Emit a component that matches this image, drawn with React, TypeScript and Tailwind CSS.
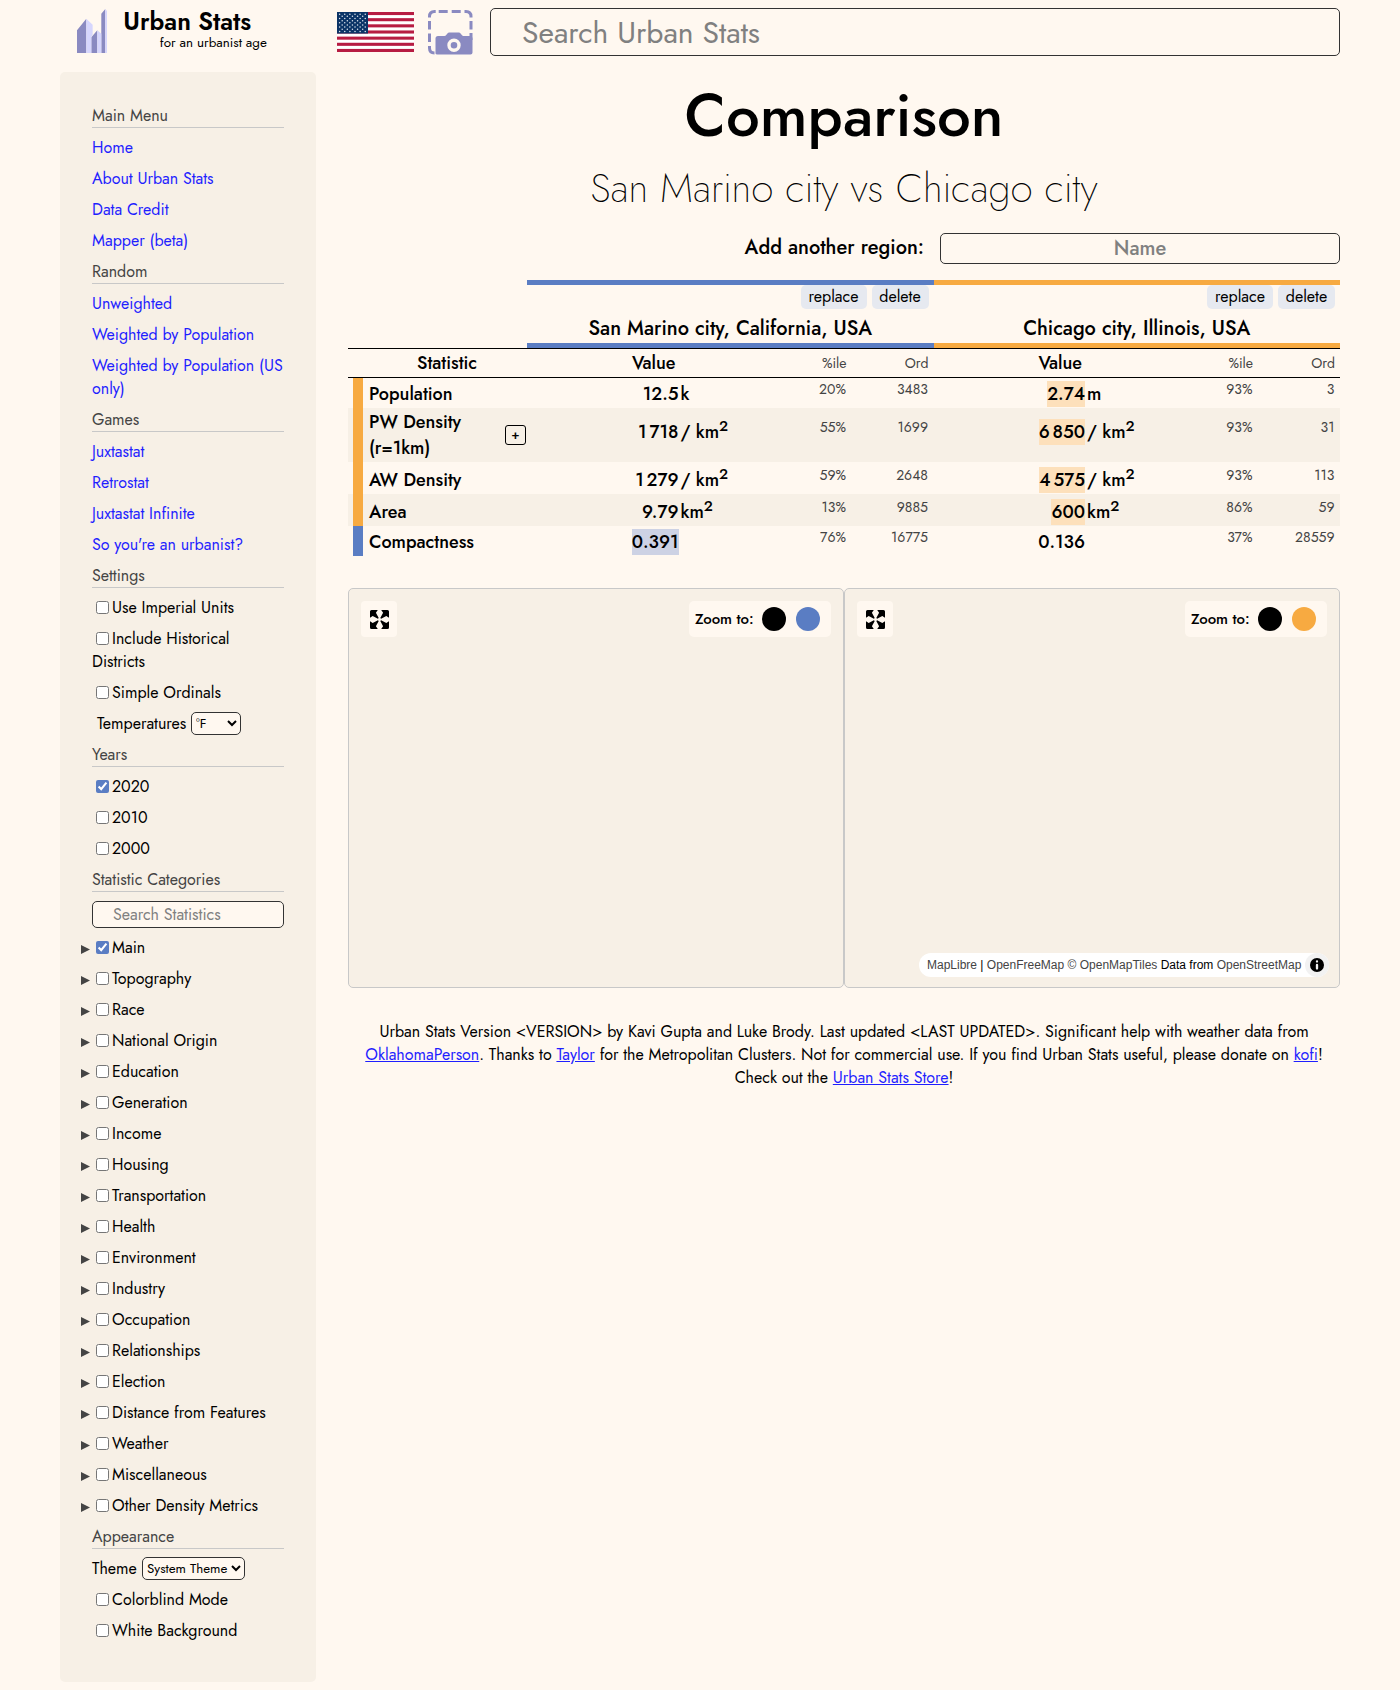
import React from "react";

const BLUE = "#5a7dc3";
const ORANGE = "#f7aa41";

function Logo() {
  return (
    <svg viewBox="80 28 91 132" className="h-11 w-[30.3px]">
      <path fill="#8a8ac1" d="M80 92L108 57V160H80ZM123 113L141 92V160H123ZM153 42L165 28V160H153Z" />
      <path fill="#d6d6fd" d="M108 57L127 75V105L123 113V160H108ZM141 92L153 102V160H141ZM165 28L171 35V160H165Z" />
    </svg>
  );
}

function Flag() {
  const stripes = [0, 2, 4, 6, 8, 10, 12];
  const stars: React.ReactNode[] = [];
  for (let r = 0; r < 9; r++) {
    const n = r % 2 === 0 ? 6 : 5;
    for (let c = 0; c < n; c++) {
      stars.push(<circle key={`${r}-${c}`} cx={2.6 + c * 5.13 + (r % 2) * 2.56} cy={2.2 + r * 2.15} r="0.75" fill="#dfe6ee" />);
    }
  }
  return (
    <svg viewBox="0 0 77 40" className="h-10 w-[77px]" preserveAspectRatio="none">
      <rect width="77" height="40" fill="#fff" />
      {stripes.map((s) => (
        <rect key={s} y={(s * 40) / 13} width="77" height={40 / 13} fill="#b71c42" />
      ))}
      <rect width="31" height="21.54" fill="#0b3466" />
      {stars}
    </svg>
  );
}

function Camera() {
  return (
    <svg viewBox="0 0 44.500 44.500" className="h-[44.5px] w-[44.5px]">
      <path
        d="M1.500 7.500V6.500Q1.500 1.500 6.500 1.500H7.700M10.700 1.500H19.700M23.700 1.500H32.700M36.500 1.500H38Q43 1.500 43 6.500V7.500M43 11V19.500M43 23V30M1.500 11V19.500M1.500 23.500V32M1.500 36V38Q1.500 43 6.500 43"
        fill="none"
        stroke="#8a8ac1"
        strokeWidth="3"
      />
      <path d="M7.500 44V28.500q0-2.500 2.500-2.500h6.500q1 0 1.700-1l1-1.300q.8-1.200 2.200-1.200h9.200q1.400 0 2.200 1.200l1 1.300q.7 1 1.700 1h7q2 0 2 2.500v14q0 2-2 2h-33q-2 0-2-1z" fill="#8a8ac1" />
      <circle cx="26" cy="35.200" r="5" fill="none" stroke="#fff8f0" strokeWidth="3.400" />
    </svg>
  );
}

function Expand() {
  return (
    <svg viewBox="0 0 19 19" className="h-[19px] w-[19px]">
      {[0, 90, 180, 270].map((a) => (
        <path key={a} transform={`rotate(${a} 9.5 9.5)`} d="M0 7.800V1.500Q0 0 1.500 0H7.800L5.900 2.700L8.700 7.900L7.900 8.700L2.700 5.900Z" />
      ))}
    </svg>
  );
}

function Heading({ children }: { children: React.ReactNode }) {
  return <div className="h-6 border-b border-[#c8c8c8] text-[#444]">{children}</div>;
}

function Links({ items }: { items: string[] }) {
  return (
    <>
      {items.map((t) => (
        <a key={t} className="text-[#1f1fff]">{t}</a>
      ))}
    </>
  );
}

function Check({ label, checked, arrow }: { label: string; checked?: boolean; arrow?: boolean }) {
  return (
    <div className="relative">
      {arrow && (
        <svg viewBox="0 0 9 9" className="absolute top-[8.5px] -left-[11px] h-[9px] w-[9px]">
          <path d="M0 0L9 4.500L0 9Z" fill="#444" />
        </svg>
      )}
      <input type="checkbox" defaultChecked={checked} className="mr-[3px] ml-1 h-[13px] w-[13px] align-[-1px] accent-[#5a7dc3]" />
      {label}
    </div>
  );
}

const categories = [
  "Main", "Topography", "Race", "National Origin", "Education", "Generation", "Income", "Housing",
  "Transportation", "Health", "Environment", "Industry", "Occupation", "Relationships", "Election",
  "Distance from Features", "Weather", "Miscellaneous", "Other Density Metrics",
];

function Sidebar() {
  return (
    <nav className="flex h-[1610px] w-64 shrink-0 flex-col gap-2 rounded-[5px] bg-[#f7f0e6] p-8 text-[16px] leading-[23px]">
      <Heading>Main Menu</Heading>
      <Links items={["Home", "About Urban Stats", "Data Credit", "Mapper (beta)"]} />
      <Heading>Random</Heading>
      <Links items={["Unweighted", "Weighted by Population", "Weighted by Population (US only)"]} />
      <Heading>Games</Heading>
      <Links items={["Juxtastat", "Retrostat", "Juxtastat Infinite", "So you're an urbanist?"]} />
      <Heading>Settings</Heading>
      <Check label="Use Imperial Units" />
      <Check label="Include Historical Districts" />
      <Check label="Simple Ordinals" />
      <div className="flex h-[23px] pl-[5px]">
        <span className="w-[94px]">Temperatures</span>
        <select className="h-[23px] w-[50px] rounded-[5px] border border-[#333] bg-[#fff8f0] text-[13.333px]">
          <option>°F</option>
        </select>
      </div>
      <Heading>Years</Heading>
      <Check label="2020" checked />
      <Check label="2010" />
      <Check label="2000" />
      <Heading>Statistic Categories</Heading>
      <input placeholder="Search Statistics" className="mt-px h-[27px] w-full rounded-[5px] border border-[#333] bg-[#fff8f0] px-5 placeholder:text-[#808080]" />
      {categories.map((c) => (
        <Check key={c} label={c} arrow checked={c === "Main"} />
      ))}
      <Heading>Appearance</Heading>
      <div className="flex h-[23px]">
        <span className="w-[50px]">Theme</span>
        <select className="h-[23px] w-[103px] rounded-[5px] border border-[#333] bg-[#fff8f0] text-[13.333px]">
          <option>System Theme</option>
        </select>
      </div>
      <Check label="Colorblind Mode" />
      <Check label="White Background" />
    </nav>
  );
}

function Header() {
  return (
    <header className="flex h-[72px] items-start">
      <div className="mt-[9px] ml-[17px] flex w-[260px]">
        <Logo />
        <div className="ml-4 flex flex-col">
          <span className="h-[26px] text-[24.6px] leading-[26px] font-semibold">Urban Stats</span>
          <span className="ml-[36.5px] text-[13.4px] leading-[16px]">for an urbanist age</span>
        </div>
      </div>
      <div className="mt-3">
        <Flag />
      </div>
      <div className="mt-[10px] ml-[14px]">
        <Camera />
      </div>
      <input
        placeholder="Search Urban Stats"
        className="mt-2 ml-[17.5px] h-12 w-[850px] rounded-[5px] border border-[#333] px-[31px] text-[30px] placeholder:text-[#808080]"
      />
    </header>
  );
}

interface Cell {
  value: string;
  unit?: string;
  sup?: boolean;
  pct: string;
  ord: string;
  hl?: boolean;
}

interface Row {
  name: string;
  height: string;
  first: Cell;
  second: Cell;
}

const rows: Row[] = [
  { name: "Population", height: "h-[30px]", first: { value: "12.5", unit: "k", pct: "20%", ord: "3483" }, second: { value: "2.74", unit: "m", pct: "93%", ord: "3", hl: true } },
  { name: "PW Density (r=1km)", height: "h-[54px]", first: { value: "1 718", unit: "/ km", sup: true, pct: "55%", ord: "1699" }, second: { value: "6 850", unit: "/ km", sup: true, pct: "93%", ord: "31", hl: true } },
  { name: "AW Density", height: "h-8", first: { value: "1 279", unit: "/ km", sup: true, pct: "59%", ord: "2648" }, second: { value: "4 575", unit: "/ km", sup: true, pct: "93%", ord: "113", hl: true } },
  { name: "Area", height: "h-8", first: { value: "9.79", unit: "km", sup: true, pct: "13%", ord: "9885" }, second: { value: "600", unit: "km", sup: true, pct: "86%", ord: "59", hl: true } },
  { name: "Compactness", height: "h-[30px]", first: { value: "0.391", pct: "76%", ord: "16775", hl: true }, second: { value: "0.136", pct: "37%", ord: "28559" } },
];

function ValueCells({ cell, side, top }: { cell: Cell; side: "first" | "second"; top: string }) {
  const hl = cell.hl ? (side === "first" ? "bg-[#cdd2e4]" : "bg-[#fde0bb]") : "";
  return (
    <div className={`flex w-[406.5px] items-start ${top}`}>
      <div className="flex w-[151.5px] justify-end">
        <span className={`h-[26px] text-[18px] leading-[26px] font-medium whitespace-pre [word-spacing:-2.5px] ${hl}`}>{cell.value}</span>
      </div>
      <div className="w-[87.5px] pl-[2px] text-[18px] leading-[26px] font-medium">
        {cell.unit}
        {cell.sup && <span className="relative -top-[7px] text-[15px] leading-none">2</span>}
      </div>
      <div className="w-20 text-right text-[14px] leading-[17px] text-[#444]">{cell.pct}</div>
      <div className="w-[82px] text-right text-[14px] leading-[17px] text-[#444]">{cell.ord}</div>
    </div>
  );
}

function RegionHead({ name, color }: { name: string; color: string }) {
  return (
    <div className="flex h-[68px] w-[406.5px] flex-col border-y-[5px]" style={{ borderColor: color }}>
      <div className="flex justify-end gap-[5px] pr-[5px] text-[16px] leading-[23px]">
        <button className="h-6 w-[66px] rounded-[5px] bg-[#e6e9f0] pb-px">replace</button>
        <button className="h-6 w-[57px] rounded-[5px] bg-[#e6e9f0] pb-px">delete</button>
      </div>
      <div className="mt-[5px] h-[29px] text-center text-[20px] leading-[30px] font-medium">{name}</div>
    </div>
  );
}

function Table() {
  const tops = ["pt-[3px]", "pt-[11px]", "pt-[5px]", "pt-[5px]", "pt-[3px]"];
  const labelTops = ["pt-[2px]", "w-[110px]", "pt-1", "pt-1", "pt-[2px]"];
  return (
    <section className="mt-4 flex flex-col">
      <div className="flex justify-end">
        <RegionHead name="San Marino city, California, USA" color={BLUE} />
        <RegionHead name="Chicago city, Illinois, USA" color={ORANGE} />
      </div>
      <div className="flex h-[30px] border-y border-black text-[18px] leading-[28px] font-medium">
        <div className="w-[179px] pl-[19px] text-center">Statistic</div>
        {[0, 1].map((i) => (
          <div key={i} className="flex w-[406.5px]">
            <div className="w-[253.5px] text-center">Value</div>
            <div className="w-[66px] text-right text-[14px] font-normal text-[#444]">%ile</div>
            <div className="w-[82px] text-right text-[14px] font-normal text-[#444]">Ord</div>
          </div>
        ))}
      </div>
      {rows.map((r, i) => (
        <div key={r.name} className={`flex ${r.height} ${i % 2 ? "bg-[#f7f0e6]" : ""}`}>
          <div className={`ml-[5px] w-[10px] ${i === 4 ? "bg-[#5a7dc3]" : "bg-[#f7aa41]"}`} />
          <div className="flex w-[164px] items-center justify-between pl-[6px] text-[18px] leading-[26px] font-medium">
            <span className={labelTops[i]}>{r.name}</span>
            {i === 1 && (
              <span className="mr-px flex h-5 w-[21px] items-center justify-center rounded-[3px] border border-black pb-[2px] text-[13px] leading-none">+</span>
            )}
          </div>
          <ValueCells cell={r.first} side="first" top={tops[i]} />
          <ValueCells cell={r.second} side="second" top={tops[i]} />
        </div>
      ))}
    </section>
  );
}

function MapPanel({ color, attribution }: { color: string; attribution?: boolean }) {
  return (
    <div className="flex h-[400px] w-[496px] flex-col justify-between rounded-[5px] border border-[#c8c8c8] bg-[#f7f0e6] p-3">
      <div className="flex justify-between">
        <div className="flex h-9 w-9 items-center justify-center rounded-[4px] bg-[#fff8f0]">
          <Expand />
        </div>
        <div className="flex h-9 w-[142px] items-center rounded-[5px] bg-[#fff8f0] pl-[6px]">
          <span className="w-[67px] text-[15px] font-medium">Zoom to:</span>
          <span className="h-6 w-6 rounded-full bg-black" />
          <span className="ml-[10px] h-6 w-6 rounded-full" style={{ backgroundColor: color }} />
        </div>
      </div>
      {attribution && (
        <div className="-mr-[2px] -mb-[2px] flex h-6 w-[410px] items-center self-end rounded-full bg-white pl-2 font-['Liberation_Sans',sans-serif] text-[12px] text-black">
          <span className="flex-1 whitespace-nowrap">
            <span className="text-[#444]">MapLibre</span> | <span className="text-[#444]">OpenFreeMap</span>{" "}
            <span className="text-[#444]">© OpenMapTiles</span> Data from <span className="text-[#444]">OpenStreetMap</span>
          </span>
          <span className="flex h-6 w-6 items-center justify-center rounded-full bg-[#f2f2f2]">
            <svg viewBox="4 4 12 12" className="h-[14px] w-[14px]" fillRule="evenodd">
              <path d="M4 10a6 6 0 1 0 12 0 6 6 0 1 0-12 0m5-3a1 1 0 1 0 2 0 1 1 0 1 0-2 0m0 3a1 1 0 1 1 2 0v3a1 1 0 1 1-2 0" />
            </svg>
          </span>
        </div>
      )}
    </div>
  );
}

function Footer() {
  const link = "text-[#1f1fff] underline";
  return (
    <footer className="mt-8 text-center text-[16px] leading-[23px] whitespace-nowrap">
      <div>
        Urban Stats Version &lt;VERSION&gt; by Kavi Gupta and Luke Brody. Last updated &lt;LAST UPDATED&gt;. Significant help with weather data from
      </div>
      <div>
        <a className={link}>OklahomaPerson</a>. Thanks to <a className={link}>Taylor</a> for the Metropolitan Clusters. Not for commercial use. If you
        find Urban Stats useful, please donate on <a className={link}>kofi</a>!
      </div>
      <div>
        Check out the <a className={link}>Urban Stats Store</a>!
      </div>
    </footer>
  );
}

export default function App() {
  return (
    <div className="h-[1690px] bg-[#fff8f0] px-[60px] font-['Jost','Lato',sans-serif] text-black">
      <Header />
      <div className="flex gap-8">
        <Sidebar />
        <main className="flex w-[992px] flex-col">
          <h1 className="mt-2 text-center text-[60px] leading-[72px] font-medium">Comparison</h1>
          <h2 className="mt-[7px] text-center text-[40px] leading-[58px] font-extralight">San Marino city vs Chicago city</h2>
          <div className="mt-4 flex h-[31px] justify-end text-[20px] font-medium">
            <span className="mr-4 leading-[29px]">Add another region:</span>
            <input placeholder="Name" className="h-[31px] w-[400px] rounded-[5px] border border-[#333] text-center placeholder:text-[#808080]" />
          </div>
          <Table />
          <div className="mt-8 flex">
            <MapPanel color={BLUE} />
            <MapPanel color={ORANGE} attribution />
          </div>
          <Footer />
        </main>
      </div>
    </div>
  );
}
